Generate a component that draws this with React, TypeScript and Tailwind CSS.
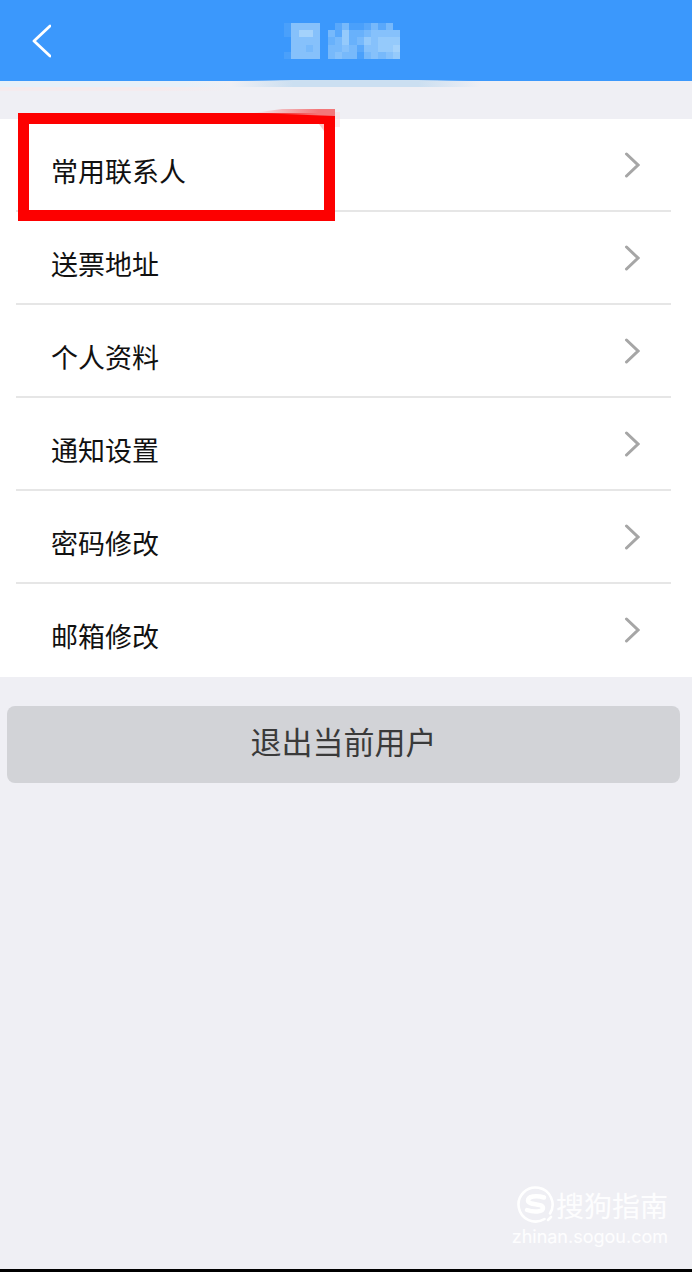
const MENU_ITEMS = [
  { label: "常用联系人", highlighted: true },
  { label: "送票地址" },
  { label: "个人资料" },
  { label: "通知设置" },
  { label: "密码修改" },
  { label: "邮箱修改" },
];

// brightness of each block of the masked user name, 0 = header colour
const MASK_ROWS = [
  "1555500241124240",
  "1577504263345555",
  "0555503463465666",
  "0554504454255667",
  "1555504544145456",
];

function MaskedName() {
  return (
    <svg
      viewBox="0 0 16 5"
      preserveAspectRatio="none"
      shapeRendering="crispEdges"
      className="h-9 w-[116px]"
      aria-hidden="true"
    >
      {MASK_ROWS.map((row, y) =>
        row
          .split("")
          .map((level, x) => (
            <rect
              key={`${x}-${y}`}
              x={x}
              y={y}
              width="1"
              height="1"
              fill="#c4e4fa"
              fillOpacity={Number(level) * 0.11}
            />
          ))
      )}
    </svg>
  );
}

function BackIcon() {
  return (
    <svg
      viewBox="0 0 20 34"
      className="h-[34px] w-5"
      fill="none"
      stroke="white"
      strokeWidth="2.8"
      strokeLinecap="round"
      strokeLinejoin="round"
      aria-hidden="true"
    >
      <path d="M19 2 3 17 19 32" />
    </svg>
  );
}

function ArrowIcon() {
  return (
    <svg
      viewBox="0 0 16 26"
      className="h-[26px] w-4 shrink-0"
      fill="none"
      stroke="#a6a6a6"
      strokeWidth="3"
      strokeLinecap="round"
      aria-hidden="true"
    >
      <path d="M2.5 2 14 13 2.5 24" />
    </svg>
  );
}

function HighlightFrame() {
  return (
    <span className="pointer-events-none absolute -top-[6px] left-[2px] h-[108px] w-[317px] border-[11px] border-[#fd0000]">
      <svg
        viewBox="0 0 90 24"
        className="absolute -right-[18px] -top-[15px] h-6 w-[90px]"
        aria-hidden="true"
      >
        <defs>
          <linearGradient id="frameGlow">
            <stop offset="0" stopColor="#f37779" stopOpacity="0" />
            <stop offset="0.8" stopColor="#f37779" />
          </linearGradient>
        </defs>
        <path d="M0 4 30 0H83V7L0 4Z" fill="url(#frameGlow)" />
        <path d="M83 3h5v15h-5Z" fill="#fbd9db" opacity="0.5" />
        <path d="M67 15h5v7Z" fill="#f37779" opacity="0.4" />
      </svg>
    </span>
  );
}

function SogouLogo() {
  return (
    <svg
      viewBox="0 0 40 40"
      className="size-10"
      fill="none"
      stroke="white"
      strokeLinecap="round"
      aria-hidden="true"
    >
      <path d="M28.5 34A17 17 0 1 1 34 28.5" strokeWidth="2.6" />
      <path d="m32 35 3-3" strokeWidth="2.6" />
      <path
        d="M28 12.5C20 10 12 11.5 12 15.5c0 5 15 2.5 15 7.5 0 4-9 4.5-16 2"
        strokeWidth="4.5"
      />
    </svg>
  );
}

export default function App() {
  return (
    <div className="flex min-h-screen flex-col border-b-[3px] border-black bg-[#efeff4] font-['Noto_Sans_CJK_SC',sans-serif]">
      <header className="grid h-[81px] grid-cols-[1fr_auto_1fr] items-center bg-[#3b98fc] pl-[31px] pr-10">
        <button
          type="button"
          aria-label="返回"
          className="cursor-pointer justify-self-start"
        >
          <BackIcon />
        </button>
        <h1>
          <MaskedName />
        </h1>
      </header>

      <div className="relative h-[38px]">
        <div className="h-[6px] w-1/3 bg-linear-to-r from-[#e7f0f9] from-80% to-[#efeff4]" />
        <div className="h-1 w-1/3 bg-linear-to-r from-[#f5ebee] from-70% to-[#efeff4]" />
        <svg
          viewBox="0 0 250 7"
          preserveAspectRatio="none"
          className="absolute -top-px left-1/3 h-[7px] w-[250px]"
          aria-hidden="true"
        >
          <defs>
            <linearGradient id="headerGlow">
              <stop offset="0" stopColor="#cbdff1" stopOpacity="0" />
              <stop offset="0.25" stopColor="#cbdff1" />
              <stop offset="0.75" stopColor="#cbdff1" />
              <stop offset="1" stopColor="#cbdff1" stopOpacity="0" />
            </linearGradient>
          </defs>
          <path d="M0 1 50 0H205L250 1V7H0Z" fill="url(#headerGlow)" />
        </svg>
      </div>

      <main>
        <ul className="bg-white pl-4 pr-[21px]">
          {MENU_ITEMS.map((item) => (
            <li
              key={item.label}
              className="relative border-b-2 border-[#e6e6e6] last:border-transparent"
            >
              <a
                href="#"
                className="flex h-[91px] items-center justify-between pl-[35px] pr-[31px]"
              >
                <span className="pt-3 text-[27px] leading-9 text-[#111111]">
                  {item.label}
                </span>
                <ArrowIcon />
              </a>
              {item.highlighted && <HighlightFrame />}
            </li>
          ))}
        </ul>

        <div className="pb-6 pl-[7px] pr-3 pt-[29px]">
          <button
            type="button"
            className="h-[77px] w-full cursor-pointer rounded-lg bg-[#d2d3d7] pb-2 text-[31px] leading-10 text-[#3a3a3a]"
          >
            退出当前用户
          </button>
        </div>
      </main>

      <footer className="mt-auto flex flex-col items-end pb-5 pr-6 text-white/90">
        <div className="flex items-center">
          <SogouLogo />
          <span className="text-[28px] leading-9">搜狗指南</span>
        </div>
        <span className="font-['Inter',sans-serif] text-[18px] leading-6">
          zhinan.sogou.com
        </span>
      </footer>
    </div>
  );
}
